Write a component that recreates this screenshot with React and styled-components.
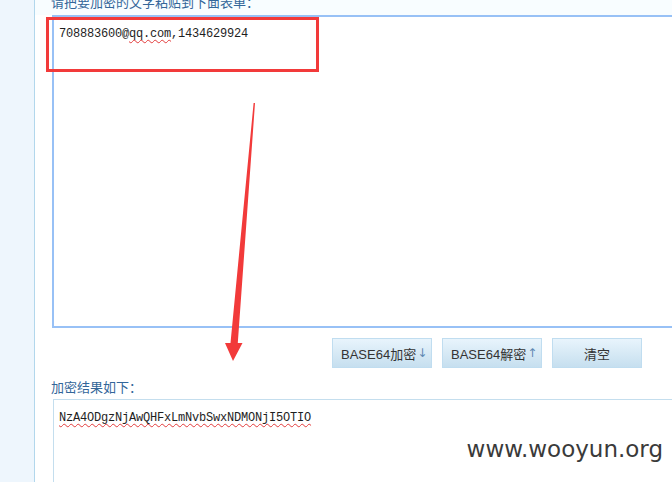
import React from "react";
import styled, { createGlobalStyle } from "styled-components";

const GlobalStyle = createGlobalStyle`
  html, body {
    margin: 0;
    padding: 0;
    width: 672px;
    height: 482px;
    overflow: hidden;
    background: #ffffff;
  }
  #root {
    position: relative;
    width: 672px;
    height: 482px;
    overflow: hidden;
  }
`;

const Page = styled.div`
  display: flex;
  width: 672px;
  height: 482px;
  font-family: "Noto Sans CJK SC", "Liberation Sans", sans-serif;
`;

const Sidebar = styled.div`
  flex: 0 0 34px;
  background: #eef6fd;
  border-right: 1px solid #b2d7ec;
`;

const Main = styled.div`
  flex: 1;
  display: flex;
  flex-direction: column;
  background: #ffffff;
  min-width: 0;
`;

const TopBand = styled.div`
  background: #f8fdff;
  height: 15px;
  padding-left: 16px;
  overflow: hidden;
`;

const Label = styled.div`
  font-size: 13px;
  line-height: 15px;
  color: #336699;
  margin-top: ${(p) => p.$offset || 0}px;
  white-space: nowrap;
`;

const Editor = styled.div`
  margin-left: 17px;
  width: 700px;
  height: 294px;
  border: 2px solid #98c1f6;
  border-right: none;
  background: #ffffff;
  padding: 10px 5px 5px;
  box-sizing: content-box;
`;

const Mono = styled.div`
  font-family: "Liberation Mono", "DejaVu Sans Mono", monospace;
  font-size: 12px;
  letter-spacing: -0.2px;
  line-height: 15px;
  color: #1e1e1e;
  white-space: nowrap;
`;

const Squiggle = styled.span`
  text-decoration: underline wavy #e23b3b;
  text-decoration-thickness: 1px;
  text-underline-offset: 2px;
`;

const ButtonRow = styled.div`
  display: flex;
  gap: 10px;
  padding-left: 297px;
  margin-top: 10px;
`;

const Button = styled.div`
  width: ${(p) => p.$width}px;
  height: 30px;
  box-sizing: border-box;
  border: 1px solid #c0ddf0;
  background: linear-gradient(#e8f4fc, #c6dfef);
  display: flex;
  align-items: center;
  justify-content: ${(p) => (p.$center ? "center" : "flex-start")};
  padding-left: ${(p) => (p.$center ? 0 : 8)}px;
  font-family: "Liberation Sans", "Noto Sans CJK SC", sans-serif;
  font-size: 13px;
  color: #333333;
  white-space: nowrap;
`;

const ArrowGlyph = styled.span`
  font-family: "DejaVu Sans", sans-serif;
  color: #5f88b3;
  font-size: 12px;
  margin-left: 1px;
`;

const ResultLabelRow = styled.div`
  margin-top: 11px;
  height: 20px;
  padding-left: 16px;
`;

const ResultBox = styled.div`
  margin-left: 18px;
  width: 700px;
  flex: 1;
  border: 1px solid #c4deee;
  border-right: none;
  border-bottom: none;
  background: #ffffff;
  padding: 11px 5px 9px;
`;

const Highlight = styled.div`
  position: absolute;
  left: 46px;
  top: 17px;
  width: 273px;
  height: 55px;
  box-sizing: border-box;
  border: 3px solid #f23a3a;
  pointer-events: none;
`;

const Overlay = styled.svg`
  position: absolute;
  left: 0;
  top: 0;
  pointer-events: none;
`;

const Watermark = styled.div`
  position: absolute;
  right: 9px;
  top: 436px;
  font-family: "DejaVu Sans", "Liberation Sans", sans-serif;
  font-size: 23px;
  color: #3a3a3a;
`;

export default function App() {
  return (
    <>
      <GlobalStyle />
      <Page>
        <Sidebar />
        <Main>
          <TopBand>
            <Label $offset={-6}>请把要加密的文字粘贴到下面表单：</Label>
          </TopBand>
          <Editor>
            <Mono>
              708883600@<Squiggle>qq.com</Squiggle>,1434629924
            </Mono>
          </Editor>
          <ButtonRow>
            <Button $width={100}>
              BASE64加密<ArrowGlyph>↓</ArrowGlyph>
            </Button>
            <Button $width={100}>
              BASE64解密<ArrowGlyph>↑</ArrowGlyph>
            </Button>
            <Button $width={90} $center>
              清空
            </Button>
          </ButtonRow>
          <ResultLabelRow>
            <Label>加密结果如下：</Label>
          </ResultLabelRow>
          <ResultBox>
            <Mono>
              <Squiggle>NzA4ODgzNjAwQHFxLmNvbSwxNDMONjI5OTIO</Squiggle>
            </Mono>
          </ResultBox>
        </Main>
      </Page>
      <Highlight />
      <Overlay width="672" height="482" viewBox="0 0 672 482">
        <polygon
          points="253.6,103 255,103 237.8,343 242.5,343 233,361 225,343 230.5,343"
          fill="#f23a3a"
        />
      </Overlay>
      <Watermark>www.wooyun.org</Watermark>
    </>
  );
}
